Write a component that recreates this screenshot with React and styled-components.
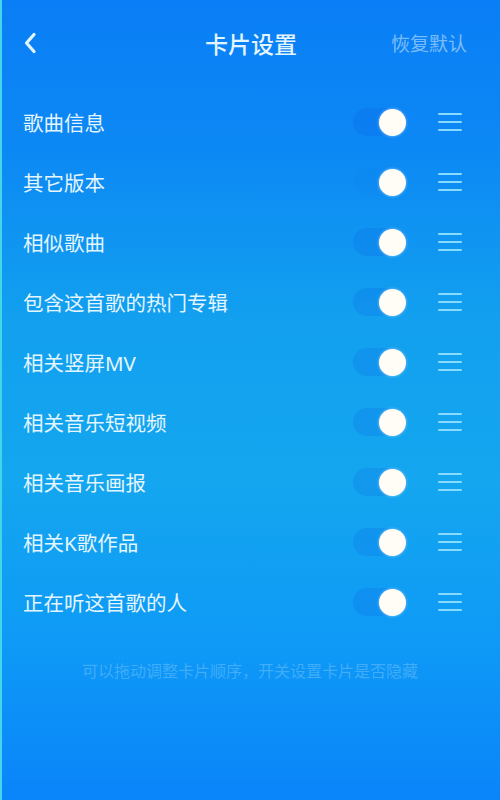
import React, { useState } from 'react'
import styled, { createGlobalStyle } from 'styled-components'

const textColor = "#e3f5ff"
const fontStack = `"Noto Sans", "Noto Sans CJK SC", sans-serif`

const GlobalStyle = createGlobalStyle`
  * {
    margin: 0;
    padding: 0;
    box-sizing: border-box;
  }
  body {
    margin: 0;
    font-family: ${fontStack};
  }
`

const Screen = styled.div`
  width: 500px;
  height: 800px;
  overflow: hidden;
  border-left: 2px solid #43d6e8;
  background: linear-gradient(
    180deg,
    #0a7ef6 0%,
    #0c88f4 18%,
    #12a0ef 40%,
    #14a6ef 60%,
    #0e9af6 80%,
    #0a84fa 100%
  );
  display: flex;
  flex-direction: column;
`

const Header = styled.div`
  height: 92px;
  display: grid;
  grid-template-columns: 1fr auto 1fr;
  align-items: center;
  padding: 0 33px 6px 33px;
`

const BackButton = styled.button`
  background: none;
  border: none;
  width: 24px;
  height: 24px;
  margin-left: -13px;
  display: flex;
  align-items: center;
  justify-content: flex-start;
  cursor: pointer;
`

const Title = styled.h1`
  font-size: 23px;
  font-weight: 500;
  color: ${textColor};
`

const Reset = styled.span`
  justify-self: end;
  font-size: 19px;
  color: rgba(220, 240, 255, 0.55);
`

const List = styled.ul`
  list-style: none;
  display: flex;
  flex-direction: column;
`

const Row = styled.li`
  height: 60px;
  display: flex;
  align-items: center;
  padding: 0 38px 0 21px;
`

const Label = styled.span`
  flex: 1;
  font-size: 20.5px;
  color: ${textColor};
`

const Track = styled.div`
  width: 54px;
  height: 28px;
  border-radius: 14px;
  background: ${p => p.$faint ? "rgba(10, 90, 230, 0.05)" : "rgba(10, 90, 230, 0.18)"};
  display: flex;
  align-items: center;
  justify-content: ${p => p.$on ? "flex-end" : "flex-start"};
  padding: 0 1px;
  margin-right: 31px;
  cursor: pointer;
`

const Knob = styled.div`
  width: 27px;
  height: 27px;
  border-radius: 50%;
  background: #fffdf6;
  box-shadow: 0 0 3px rgba(255, 255, 255, 0.6);
`

const Handle = styled.div`
  width: 24px;
  display: flex;
  flex-direction: column;
  gap: 6px;

  span {
    display: block;
    height: 2px;
    background: #86dbff;
    border-radius: 1px;
  }
`

const Hint = styled.p`
  margin-top: 26px;
  text-align: center;
  font-size: 16px;
  color: rgba(200, 235, 255, 0.28);
  padding-right: 2px;
`

const items = [
  "歌曲信息",
  "其它版本",
  "相似歌曲",
  "包含这首歌的热门专辑",
  "相关竖屏MV",
  "相关音乐短视频",
  "相关音乐画报",
  "相关K歌作品",
  "正在听这首歌的人",
]

const App = () => {
  const [state, setState] = useState(items.map(() => true))

  const toggle = i => setState(s => s.map((v, j) => (j === i ? !v : v)))

  return (
    <>
      <GlobalStyle />
      <Screen>
        <Header>
          <BackButton aria-label="返回">
            <svg width="16" height="24" viewBox="0 0 16 24" fill="none">
              <path d="M12 3.5 L4.5 12 L12 20.5" stroke={textColor} strokeWidth="3.2" strokeLinecap="round" strokeLinejoin="round" />
            </svg>
          </BackButton>
          <Title>卡片设置</Title>
          <Reset>恢复默认</Reset>
        </Header>
        <List>
          {items.map((name, i) => (
            <Row key={name}>
              <Label>{name}</Label>
              <Track $on={state[i]} $faint={i === 1} onClick={() => toggle(i)}>
                <Knob />
              </Track>
              <Handle>
                <span />
                <span />
                <span />
              </Handle>
            </Row>
          ))}
        </List>
        <Hint>可以拖动调整卡片顺序，开关设置卡片是否隐藏</Hint>
      </Screen>
    </>
  )
}

export default App
